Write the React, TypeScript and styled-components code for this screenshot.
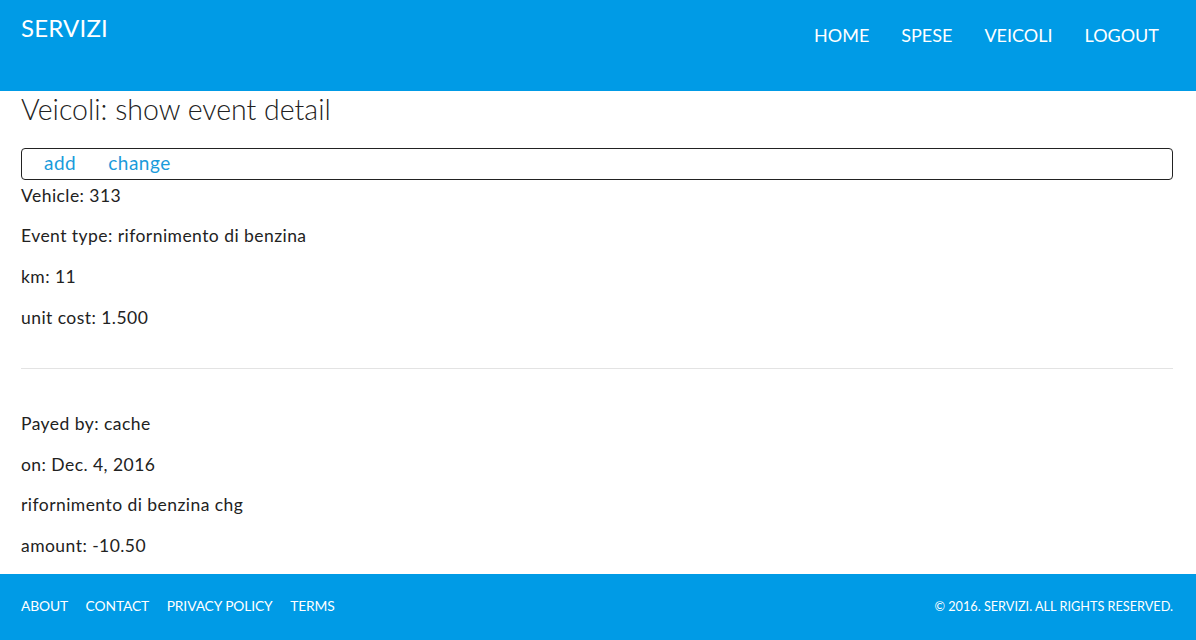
import styled, { createGlobalStyle } from "styled-components";

const GlobalStyle = createGlobalStyle`
  html, body {
    margin: 0;
    padding: 0;
    background: #ffffff;
  }
  body {
    font-family: "Lato", "Open Sans", sans-serif;
    color: #222222;
  }
`;

const Page = styled.div`
  display: flex;
  flex-direction: column;
  min-height: 640px;
`;

const Header = styled.header`
  height: 91px;
  background: #009be6;
  display: flex;
  justify-content: space-between;
  align-items: flex-start;
  padding: 0 37px 0 21px;
  box-sizing: border-box;
`;

const Brand = styled.a`
  color: #ffffff;
  font-size: 24px;
  line-height: 28px;
  margin-top: 14px;
  letter-spacing: 0.2px;
  text-decoration: none;
`;

const Nav = styled.nav`
  display: flex;
  gap: 32px;
  margin-top: 23.5px;
`;

const NavLink = styled.a`
  color: #ffffff;
  font-size: 18px;
  line-height: 22px;
  text-decoration: none;
`;

const Main = styled.main`
  flex: 1;
  padding: 0 23px 0 21px;
`;

const Title = styled.h1`
  font-size: 28.5px;
  font-weight: 300;
  line-height: 36px;
  margin: 0 0 21px;
  color: #222222;
`;

const ActionBar = styled.div`
  border: 1px solid #222222;
  border-radius: 4px;
  height: 32px;
  box-sizing: border-box;
  display: flex;
  align-items: center;
  gap: 32px;
  padding-left: 22px;
`;

const ActionLink = styled.a`
  color: #1a9bdb;
  font-size: 19px;
  letter-spacing: 0.5px;
  line-height: 22px;
  margin-top: -2px;
  text-decoration: none;
`;

const FieldList = styled.div<{ $top: number }>`
  display: flex;
  flex-direction: column;
  gap: 16.7px;
  margin-top: ${(p) => p.$top}px;
`;

const Field = styled.p`
  margin: 0;
  font-size: 17.5px;
  letter-spacing: 0.45px;
  line-height: 24px;
  color: #222222;
`;

const Rule = styled.hr`
  border: 0;
  border-top: 1px solid #e3e3e3;
  margin: 38px 0 0;
`;

const Footer = styled.footer`
  height: 66px;
  background: #009be6;
  display: flex;
  justify-content: space-between;
  align-items: center;
  padding: 0 23px 3px 21px;
  box-sizing: border-box;
  margin-top: 15px;
`;

const FooterLinks = styled.div`
  display: flex;
  gap: 17.5px;
`;

const FooterLink = styled.a`
  color: #ffffff;
  font-size: 13.8px;
  letter-spacing: -0.1px;
  text-decoration: none;
`;

const Copyright = styled.span`
  color: #ffffff;
  font-size: 12.7px;
`;

const vehicleFields = [
  "Vehicle: 313",
  "Event type: rifornimento di benzina",
  "km: 11",
  "unit cost: 1.500",
];

const paymentFields = [
  "Payed by: cache",
  "on: Dec. 4, 2016",
  "rifornimento di benzina chg",
  "amount: -10.50",
];

export default function App() {
  return (
    <Page>
      <GlobalStyle />
      <Header>
        <Brand href="#">SERVIZI</Brand>
        <Nav>
          <NavLink href="#">HOME</NavLink>
          <NavLink href="#">SPESE</NavLink>
          <NavLink href="#">VEICOLI</NavLink>
          <NavLink href="#">LOGOUT</NavLink>
        </Nav>
      </Header>
      <Main>
        <Title>Veicoli: show event detail</Title>
        <ActionBar>
          <ActionLink href="#">add</ActionLink>
          <ActionLink href="#">change</ActionLink>
        </ActionBar>
        <FieldList $top={3.5}>
          {vehicleFields.map((f) => (
            <Field key={f}>{f}</Field>
          ))}
        </FieldList>
        <Rule />
        <FieldList $top={43.5}>
          {paymentFields.map((f) => (
            <Field key={f}>{f}</Field>
          ))}
        </FieldList>
      </Main>
      <Footer>
        <FooterLinks>
          <FooterLink href="#">ABOUT</FooterLink>
          <FooterLink href="#">CONTACT</FooterLink>
          <FooterLink href="#">PRIVACY POLICY</FooterLink>
          <FooterLink href="#">TERMS</FooterLink>
        </FooterLinks>
        <Copyright>© 2016. SERVIZI. ALL RIGHTS RESERVED.</Copyright>
      </Footer>
    </Page>
  );
}
